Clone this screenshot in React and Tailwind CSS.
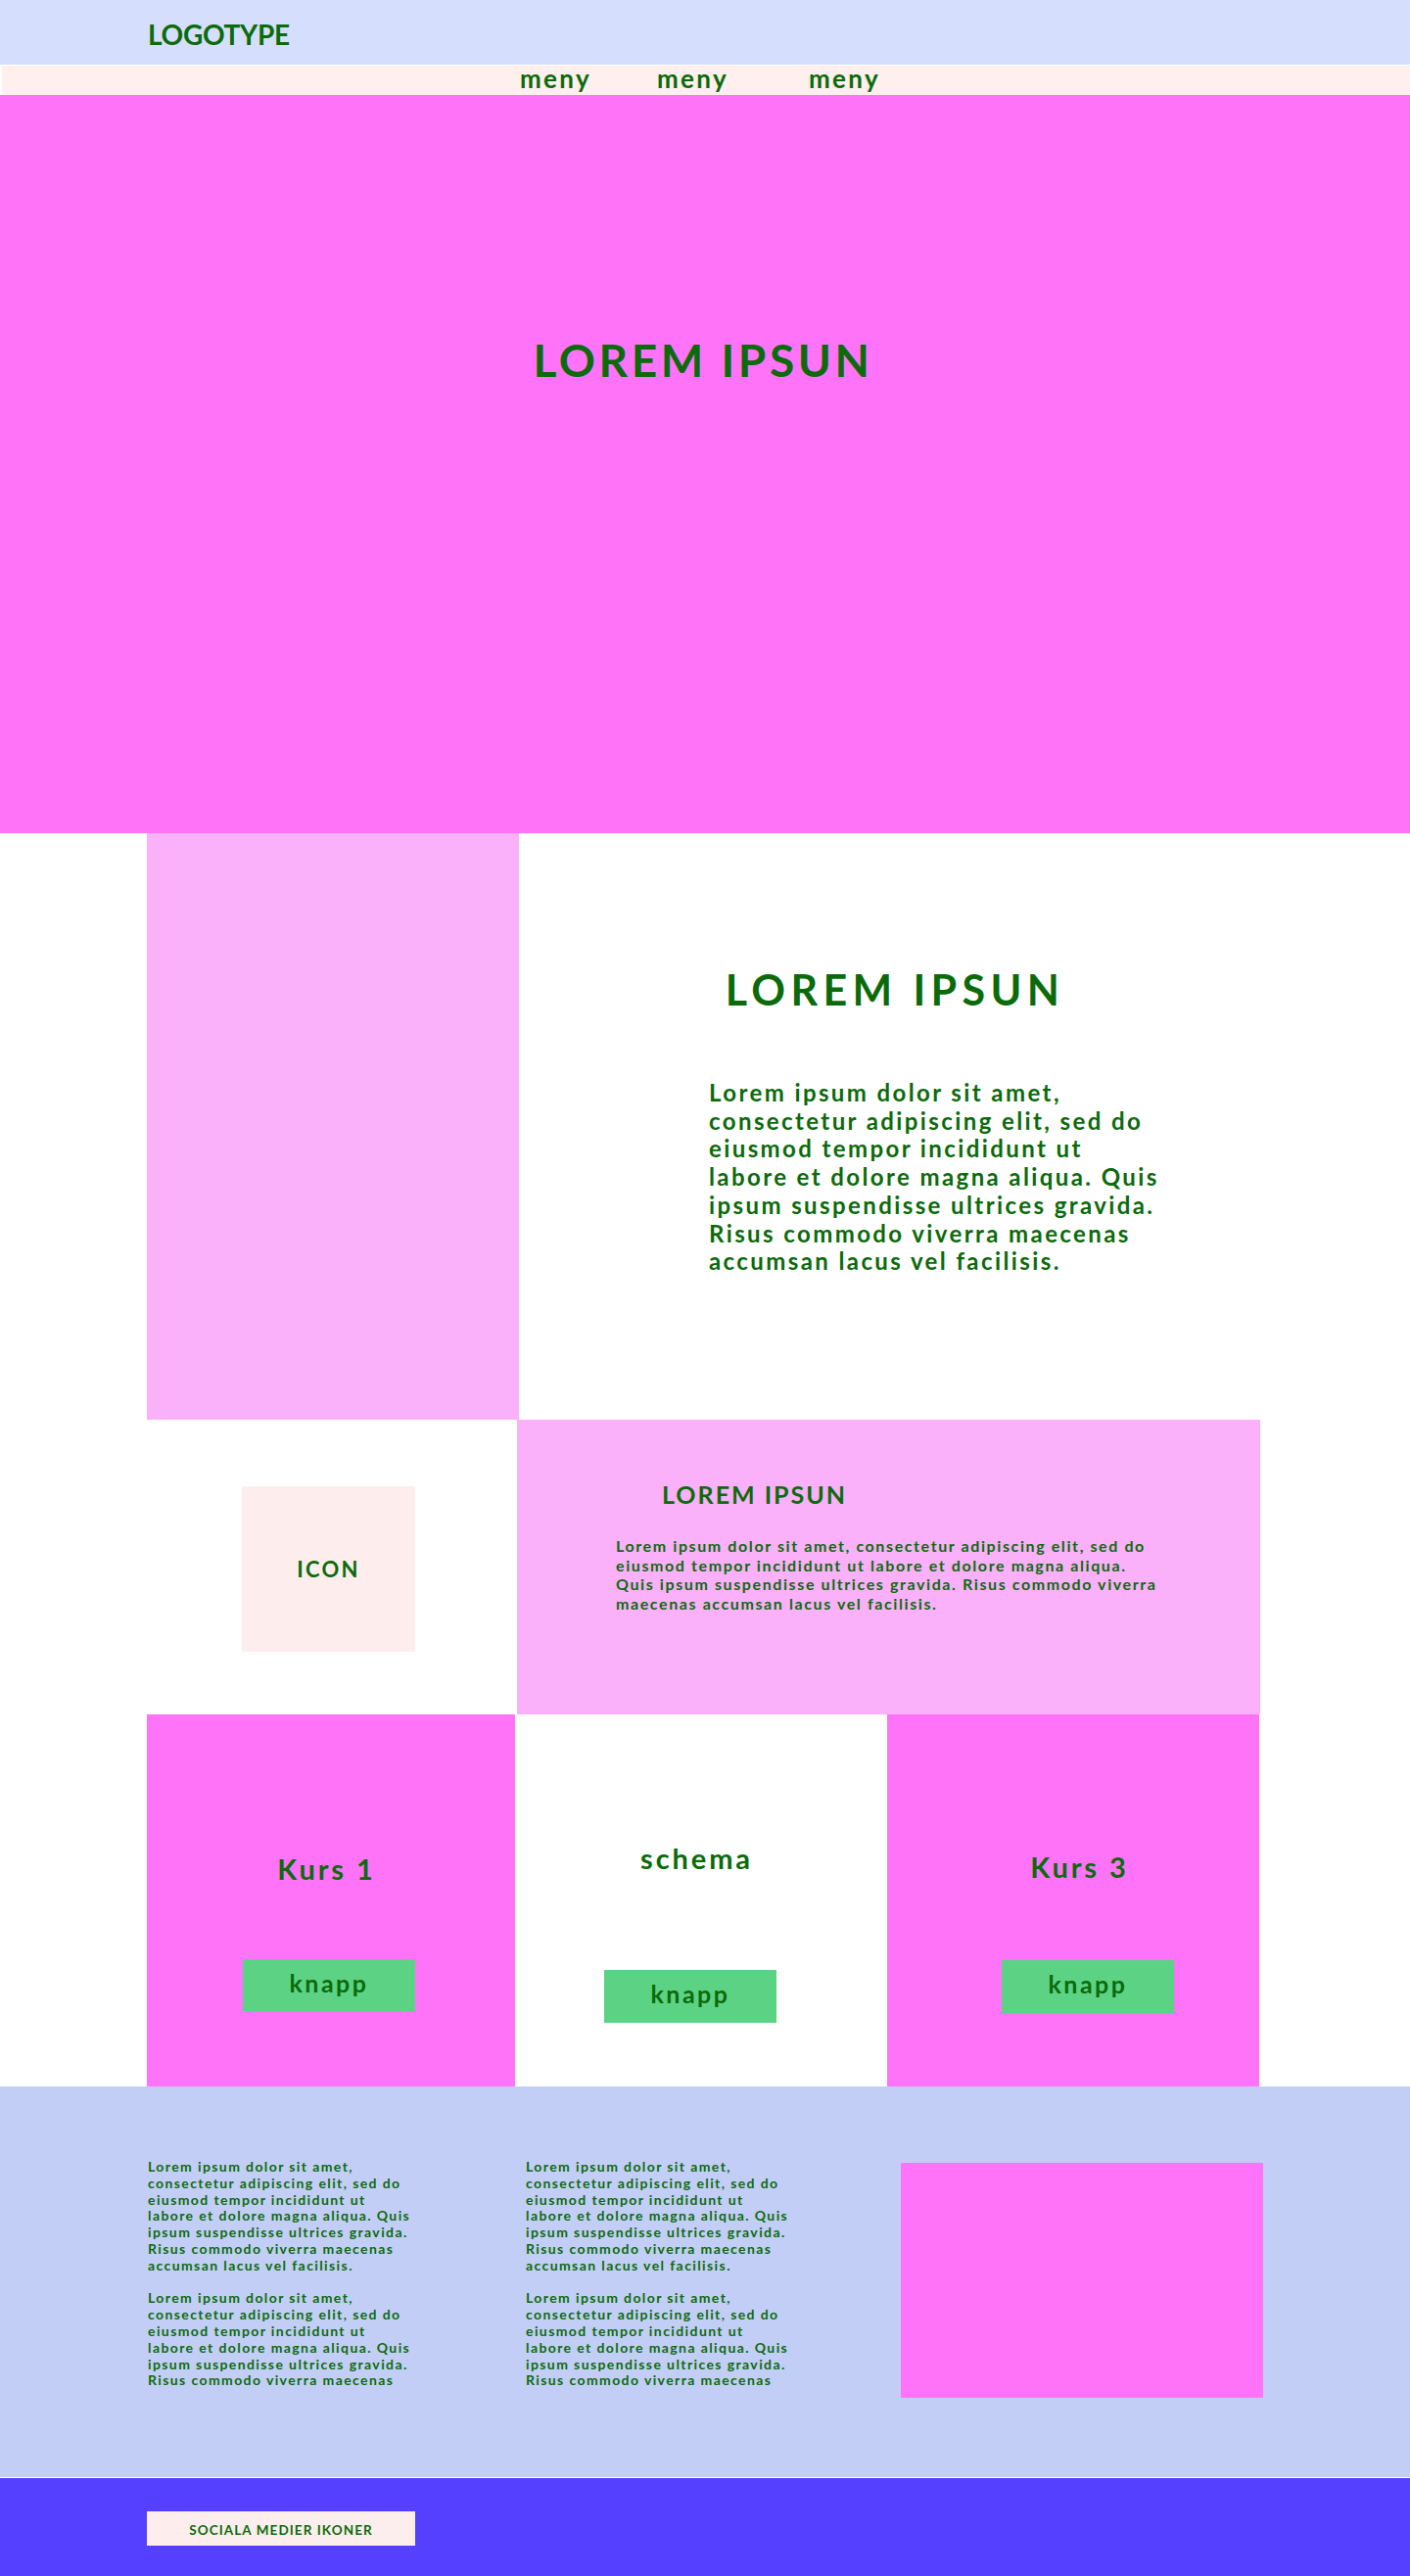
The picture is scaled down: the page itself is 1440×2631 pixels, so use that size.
import React from "react";

const lorem = [
  "Lorem ipsum dolor sit amet,",
  "consectetur adipiscing elit, sed do",
  "eiusmod tempor incididunt ut",
  "labore et dolore magna aliqua. Quis",
  "ipsum suspendisse ultrices gravida.",
  "Risus commodo viverra maecenas",
  "accumsan lacus vel facilisis.",
];

const loremWide = [
  "Lorem ipsum dolor sit amet, consectetur adipiscing elit, sed do",
  "eiusmod tempor incididunt ut labore et dolore magna aliqua.",
  "Quis ipsum suspendisse ultrices gravida. Risus commodo viverra",
  "maecenas accumsan lacus vel facilisis.",
];

const Lines = ({ lines, className }) => (
  <p className={className}>
    {lines.map((line, i) => (
      <span key={i} className="block whitespace-nowrap">
        {line}
      </span>
    ))}
  </p>
);

const Button = ({ className }) => (
  <button
    className={`h-[54px] w-[176px] bg-[#5cd384] pb-[6px] text-[25px] leading-[30px] tracking-[0.1em] ${className}`}
  >
    knapp
  </button>
);

const App = () => {
  return (
    <div className="min-h-screen bg-white font-['Lato',sans-serif] font-bold text-[#0b6b0b]">
      <header className="h-[66px] bg-[#d5defd] pl-[151px] pt-[18px]">
        <h1 className="text-[28px] leading-[34px] tracking-[-0.01em]">LOGOTYPE</h1>
      </header>

      <nav className="flex h-[31px] border-l-2 border-t border-white bg-[#ffefed] pl-[529px] text-[26px] leading-[26px] tracking-[0.09em]">
        <a className="w-[140px]">meny</a>
        <a className="w-[155px]">meny</a>
        <a>meny</a>
      </nav>

      <section className="h-[754px] bg-[#ff73f9] pt-[243px]">
        <h2 className="pr-[4px] text-center text-[46px] leading-[55px] tracking-[0.078em]">
          LOREM IPSUN
        </h2>
      </section>

      <section className="mx-auto flex h-[599px] w-[1140px]">
        <div className="w-[380px] bg-[#fbb0fa]" />
        <div className="flex-1 pt-[134px]">
          <h2 className="pl-[8px] text-center text-[43px] leading-[52px] tracking-[0.125em]">
            LOREM IPSUN
          </h2>
          <Lines
            lines={lorem}
            className="ml-[194px] mt-[65px] text-[24px] leading-[28.7px] tracking-[0.1em]"
          />
        </div>
      </section>

      <section className="mx-auto flex h-[301px] w-[1140px]">
        <div className="w-[378px] pl-[97px] pt-[68px]">
          <div className="flex h-[169px] w-[177px] items-center justify-center bg-[#fdeded] text-[22px] tracking-[0.1em]">
            ICON
          </div>
        </div>
        <div className="w-[759px] bg-[#fbb0fa] pt-[61px]">
          <h3 className="ml-[148px] text-[25px] leading-[30px] tracking-[0.08em]">
            LOREM IPSUN
          </h3>
          <Lines
            lines={loremWide}
            className="ml-[101px] mt-[28px] text-[16px] leading-[19.5px] tracking-[0.1em]"
          />
        </div>
      </section>

      <section className="mx-auto flex h-[380px] w-[1140px]">
        <div className="flex w-[376px] flex-col bg-[#ff73f9]">
          <h3 className="mt-[140px] pr-[9px] text-center text-[29px] leading-[35px] tracking-[0.1em]">
            Kurs 1
          </h3>
          <Button className="ml-[98px] mt-[75px]" />
        </div>
        <div className="flex w-[380px] flex-col">
          <h3 className="mt-[129px] pr-[9px] text-center text-[29px] leading-[35px] tracking-[0.1em]">
            schema
          </h3>
          <Button className="ml-[91px] mt-[97px]" />
        </div>
        <div className="flex w-[380px] flex-col bg-[#ff73f9]">
          <h3 className="mt-[138px] pl-[13px] text-center text-[29px] leading-[35px] tracking-[0.1em]">
            Kurs 3
          </h3>
          <Button className="ml-[117px] mt-[78px]" />
        </div>
      </section>

      <section className="h-[399px] bg-[#c3cef7]">
        <div className="mx-auto flex w-[1140px] pt-[74px] text-[14px] leading-[16.8px] tracking-[0.1em]">
          <div className="w-[387px] pl-[1px]">
            <Lines lines={lorem} />
            <Lines lines={lorem.slice(0, 6)} className="mt-[16.8px]" />
          </div>
          <div className="w-[383px]">
            <Lines lines={lorem} />
            <Lines lines={lorem.slice(0, 6)} className="mt-[16.8px]" />
          </div>
          <div className="mt-[4px] h-[240px] w-[370px] bg-[#ff73f9]" />
        </div>
      </section>

      <div className="h-px bg-white" />

      <footer className="h-[100px] bg-[#5540ff] pl-[150px] pt-[34px]">
        <div className="flex h-[35px] w-[274px] items-center justify-center bg-[#fdeeee] pt-[3px] text-[13.5px] tracking-[0.08em]">
          SOCIALA MEDIER IKONER
        </div>
      </footer>
    </div>
  );
};

export default App;
